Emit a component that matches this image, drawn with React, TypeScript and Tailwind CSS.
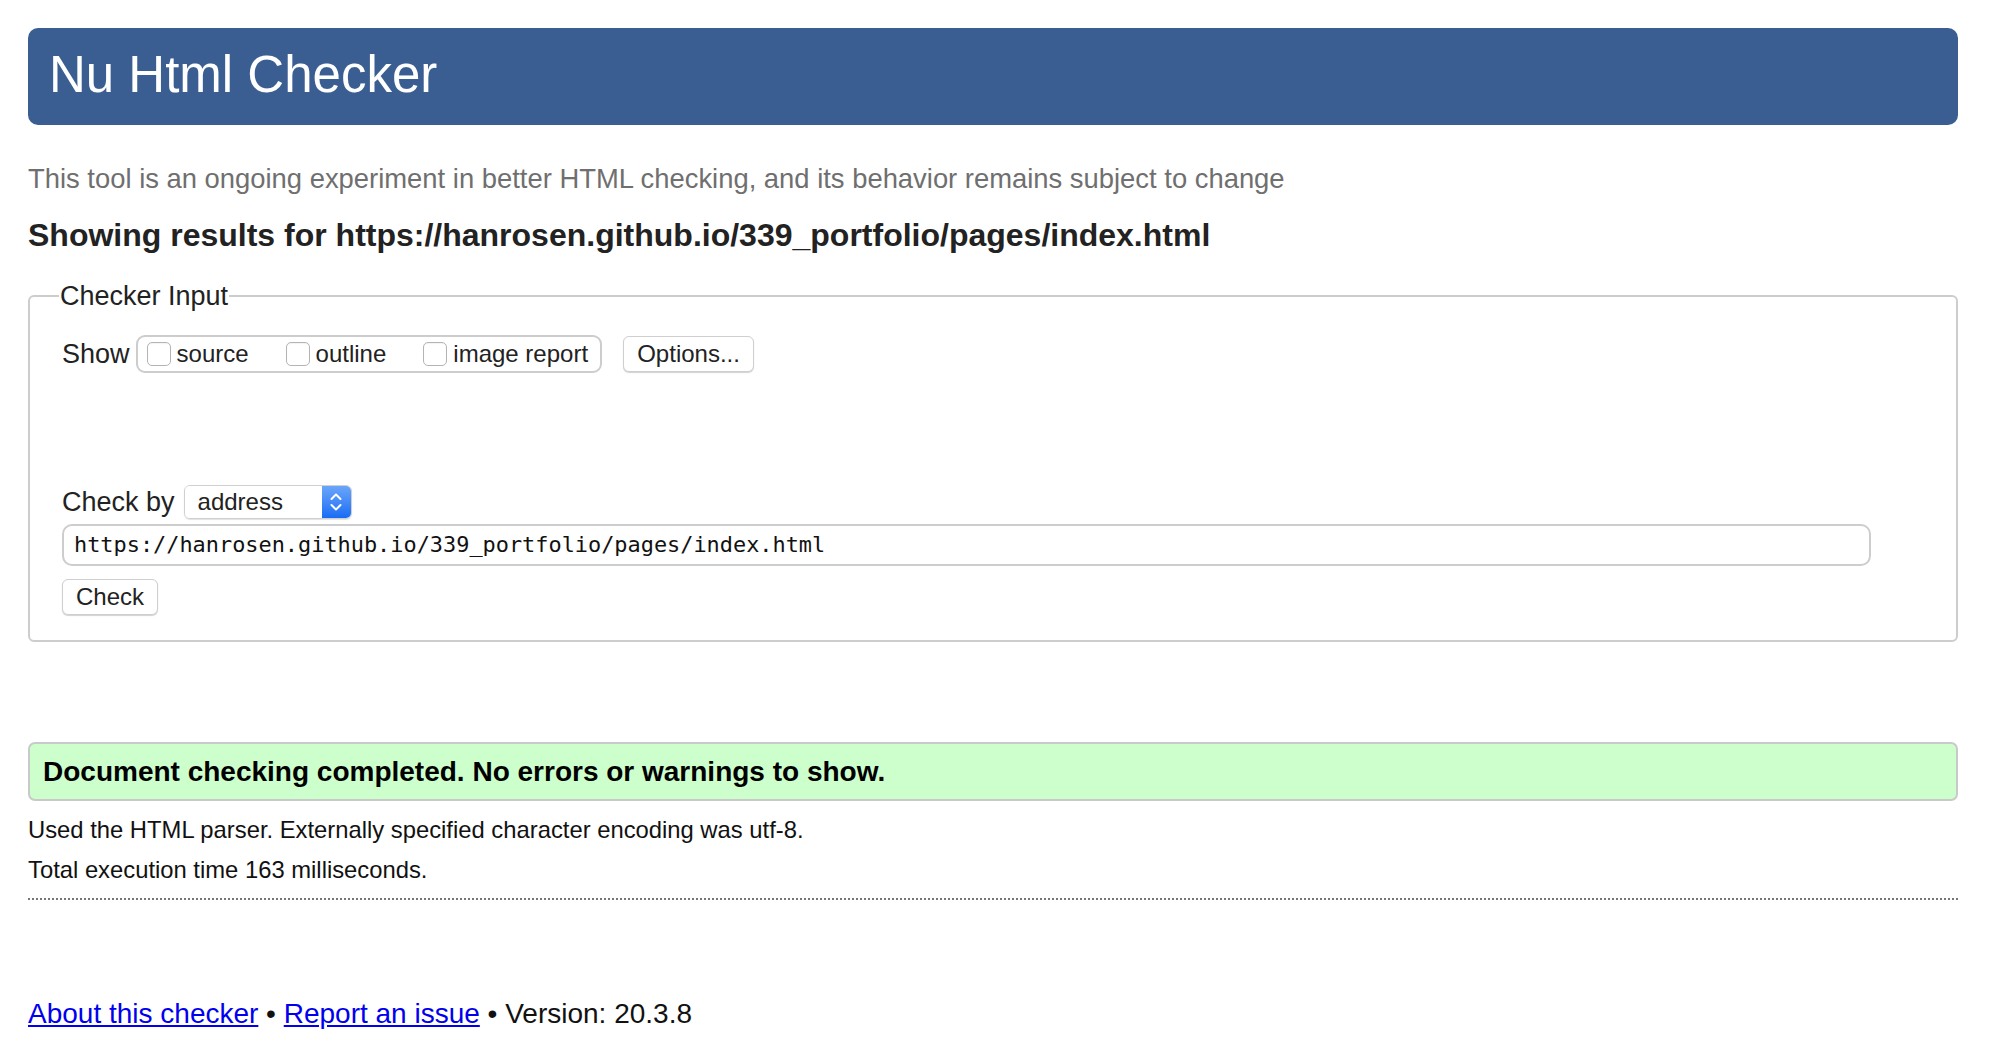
import React from "react";

const sans = "font-['Liberation_Sans',Arial,sans-serif]";

const Checkbox = ({ label }: { label: string }) => {
  return (
    <label className="flex items-center gap-[6px]">
      <span className="w-[24px] h-[24px] rounded-[5px] border border-[#b4b4b4] bg-white shadow-[inset_0_1px_1px_rgba(0,0,0,0.05)]" />
      <span className="text-[24px] leading-[30px] text-[#222]">{label}</span>
    </label>
  );
};

const Button = ({ label, w }: { label: string; w: string }) => {
  return (
    <button
      className={`${w} h-[36px] rounded-[6px] border border-[#cfcfcf] bg-white text-[24px] text-[#222] shadow-[0_1px_1px_rgba(0,0,0,0.18)] flex items-center justify-center`}
    >
      {label}
    </button>
  );
};

const App = () => {
  return (
    <div className={`${sans} bg-white min-h-[1054px] pl-[28px] pr-[42px] pt-[28px]`}>
      <div className="h-[97px] rounded-[10px] bg-[#3a5e92] flex items-center pl-[21px] pb-[3px]">
        <h1 className="text-[51px] leading-[60px] text-white">Nu Html Checker</h1>
      </div>

      <p className="mt-[37px] text-[27.4px] leading-[34px] text-[#6f6f6f]">
        This tool is an ongoing experiment in better HTML checking, and its behavior remains subject to change
      </p>
      <h2 className="mt-[19px] text-[32px] leading-[40px] font-bold text-[#222]">
        Showing results for https://hanrosen.github.io/339_portfolio/pages/index.html
      </h2>

      <fieldset className="mt-[24px] border-2 border-[#cdcdcd] rounded-[6px] pl-[32px] pb-[25px]">
        <legend className="ml-[-3px] px-[1px] text-[27px] leading-[34px] text-[#222]">Checker Input</legend>

        <div className="mt-[22px] flex items-center h-[38px]">
          <span className="text-[27px] text-[#222] mr-[6px]">Show</span>
          <div className="h-[38px] rounded-[9px] border-2 border-[#cdcdcd] flex items-center pl-[9px] pr-[12px] gap-[37px]">
            <Checkbox label="source" />
            <Checkbox label="outline" />
            <Checkbox label="image report" />
          </div>
          <div className="ml-[21px]">
            <Button label="Options..." w="w-[131px]" />
          </div>
        </div>

        <div className="mt-[112px] flex items-center h-[34px]">
          <span className="text-[27px] text-[#222] mr-[9px]">Check by</span>
          <div className="flex h-[34px] w-[168px] rounded-[6px] border border-[#cfcfcf] shadow-[0_1px_1px_rgba(0,0,0,0.12)] overflow-hidden">
            <span className="flex-1 bg-white pl-[13px] text-[24px] leading-[32px] text-[#222]">address</span>
            <span className="w-[29px] bg-gradient-to-b from-[#6aa5fa] to-[#176cf4] flex items-center justify-center">
              <svg width="14" height="22" viewBox="0 0 14 22" fill="none" stroke="white" strokeWidth="2" strokeLinecap="round" strokeLinejoin="round">
                <path d="M2.5 8 L7 3.5 L11.5 8" />
                <path d="M2.5 14 L7 18.5 L11.5 14" />
              </svg>
            </span>
          </div>
        </div>

        <div className="mt-[5px] w-[1809px] h-[42px] rounded-[10px] border-2 border-[#cdcdcd] flex items-center pl-[10px]">
          <span className="font-['DejaVu_Sans_Mono',monospace] text-[21.9px] text-[#111]">
            https://hanrosen.github.io/339_portfolio/pages/index.html
          </span>
        </div>

        <div className="mt-[13px]">
          <Button label="Check" w="w-[96px]" />
        </div>
      </fieldset>

      <div className="mt-[100px] h-[59px] rounded-[7px] border-2 border-[#c9c9c9] bg-[#ccffcc] flex items-center pl-[13px]">
        <span className="text-[28px] font-bold text-black">
          Document checking completed. No errors or warnings to show.
        </span>
      </div>

      <p className="mt-[14px] text-[23.8px] leading-[30px] text-[#111]">
        Used the HTML parser. Externally specified character encoding was utf-8.
      </p>
      <p className="mt-[10px] text-[23.8px] leading-[30px] text-[#111]">Total execution time 163 milliseconds.</p>

      <div className="mt-[13px] border-t-2 border-dotted border-[#777]" />

      <p className="mt-[96px] text-[28px] leading-[36px] text-[#111]">
        <a className="text-[#0000ee] underline">About this checker</a> •{" "}
        <a className="text-[#0000ee] underline">Report an issue</a> • Version: 20.3.8
      </p>
    </div>
  );
};

export default App;
